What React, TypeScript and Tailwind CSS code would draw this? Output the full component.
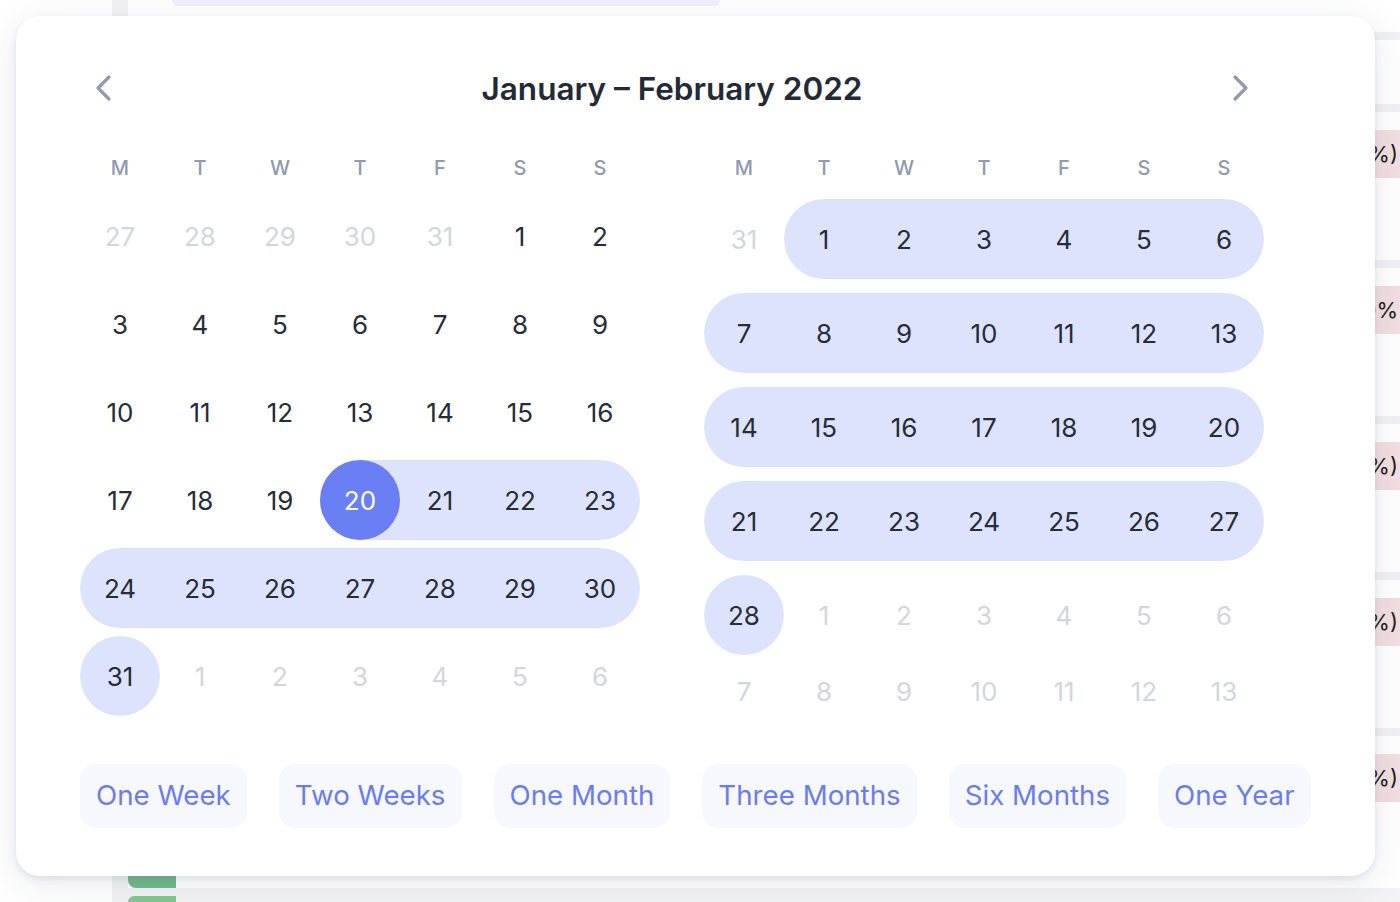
import React from 'react'

type Day = {
  n: number
  muted?: boolean
  range?: boolean
  start?: boolean
  end?: boolean
  selected?: boolean
}

const mk = (nums: number[], opts: Partial<Day> = {}): Day[] => nums.map((n) => ({ n, ...opts }))

const withEnds = (days: Day[]): Day[] => {
  const first = days.findIndex((d) => d.range)
  let last = -1
  days.forEach((d, i) => {
    if (d.range) last = i
  })
  return days.map((d, i) => ({ ...d, start: d.start || i === first, end: d.end || i === last }))
}

const january: Day[][] = [
  [...mk([27, 28, 29, 30, 31], { muted: true }), ...mk([1, 2])],
  mk([3, 4, 5, 6, 7, 8, 9]),
  mk([10, 11, 12, 13, 14, 15, 16]),
  withEnds([...mk([17, 18, 19]), { n: 20, range: true, selected: true }, ...mk([21, 22, 23], { range: true })]),
  withEnds(mk([24, 25, 26, 27, 28, 29, 30], { range: true })),
  withEnds([{ n: 31, range: true }, ...mk([1, 2, 3, 4, 5, 6], { muted: true })]),
]

const february: Day[][] = [
  withEnds([{ n: 31, muted: true }, ...mk([1, 2, 3, 4, 5, 6], { range: true })]),
  withEnds(mk([7, 8, 9, 10, 11, 12, 13], { range: true })),
  withEnds(mk([14, 15, 16, 17, 18, 19, 20], { range: true })),
  withEnds(mk([21, 22, 23, 24, 25, 26, 27], { range: true })),
  withEnds([{ n: 28, range: true }, ...mk([1, 2, 3, 4, 5, 6], { muted: true })]),
  mk([7, 8, 9, 10, 11, 12, 13], { muted: true }),
]

const weekdays = ['M', 'T', 'W', 'T', 'F', 'S', 'S']
const presets = ['One Week', 'Two Weeks', 'One Month', 'Three Months', 'Six Months', 'One Year']

function Chevron({ dir }: { dir: 'left' | 'right' }) {
  return (
    <svg width="20" height="30" viewBox="0 0 20 30" fill="none">
      <path
        d={dir === 'left' ? 'M15 4 L4 15 L15 26' : 'M5 4 L16 15 L5 26'}
        stroke="#8f9aab"
        strokeWidth="3.2"
        strokeLinecap="round"
        strokeLinejoin="round"
      />
    </svg>
  )
}

function Cell({ d, tall = true }: { d: Day; tall?: boolean }) {
  const color = d.muted ? 'text-[#d3d6dd]' : 'text-[#262d39]'
  return (
    <div
      className={`flex items-center justify-center ${tall ? 'h-20' : 'h-[44px]'} ${
        d.range ? 'bg-[#dde3fd]' : ''
      } ${d.start ? 'rounded-l-full' : ''} ${d.end ? 'rounded-r-full' : ''}`}
    >
      {d.selected ? (
        <div className="flex size-20 items-center justify-center rounded-full bg-[#6a7ff3] text-white">{d.n}</div>
      ) : (
        <span className={color}>{d.n}</span>
      )}
    </div>
  )
}

function Month({ weeks, rowGap, firstGap, shortLast }: { weeks: Day[][]; rowGap: string; firstGap: string; shortLast?: boolean }) {
  return (
    <div className="w-[560px]">
      <div className="grid h-10 grid-cols-7 items-center text-center text-[20px] font-medium text-[#8f9aad]">
        {weekdays.map((w, i) => (
          <div key={i}>{w}</div>
        ))}
      </div>
      <div className={`flex flex-col ${rowGap} ${firstGap} text-[26px]`}>
        {weeks.map((week, wi) => (
          <div key={wi} className="grid grid-cols-7">
            {week.map((d, di) => (
              <Cell key={di} d={d} tall={!(shortLast && wi === weeks.length - 1)} />
            ))}
          </div>
        ))}
      </div>
    </div>
  )
}

function BackgroundPage() {
  const rows = ['(+2.4%)', '(+8.0%', '(+1.6%)', '(-3%)', '(-5%)']
  return (
    <div className="flex h-full w-full">
      <div className="w-[112px] shrink-0" />
      <div className="w-4 shrink-0 bg-[#f2f2f3]" />
      <div className="flex min-w-0 flex-1 flex-col">
        <div className="ml-[44px] h-[6px] w-[548px] rounded-b-xl bg-[#eef0fd]" />
        <div className="mt-[26px] h-2 bg-[#f2f2f4]" />
        <div className="h-16" />
        {rows.map((r, i) => (
          <div key={i} className="flex h-[156px] flex-col">
            <div className="h-2 bg-[#f2f2f4]" />
            <div className="mt-[18px] flex h-12 items-center justify-end self-end bg-[#f3dfe0] pl-3 pr-[2px] text-[22px] text-[#222]">
              {r}
            </div>
          </div>
        ))}
        <div className="-mt-[10px] flex h-[14px] items-stretch">
          <div className="w-12 rounded-bl-lg bg-[#74b98a]" />
          <div className="flex-1" />
        </div>
        <div className="flex flex-1 items-stretch bg-[#f3f3f5]">
          <div className="mt-2 w-12 rounded-tl-lg bg-[#82c98f]" />
        </div>
      </div>
    </div>
  )
}

export default function App() {
  return (
    <div className="relative h-[902px] w-full overflow-hidden bg-white" style={{ fontFamily: 'Inter, "Noto Sans", sans-serif' }}>
      <BackgroundPage />

      {/* Date range popover */}
      <div className="absolute left-4 top-4 h-[860px] w-[1359px] rounded-3xl bg-white pl-16 pt-12 shadow-[0_3px_6px_rgba(40,50,90,0.10),0_8px_40px_rgba(40,50,90,0.10)]">
        <div className="flex h-12 w-[1184px] items-center justify-between">
          <button className="flex size-12 items-center justify-center">
            <Chevron dir="left" />
          </button>
          <h2 className="pt-[2px] text-[31.5px] font-semibold text-[#232a36]">January – February 2022</h2>
          <button className="flex size-12 items-center justify-center">
            <Chevron dir="right" />
          </button>
        </div>

        <div className="mt-9 flex gap-16">
          <Month weeks={january} rowGap="gap-2" firstGap="mt-2" />
          <Month weeks={february} rowGap="gap-[14px]" firstGap="mt-[11px]" shortLast />
        </div>

        <div className="mt-12 flex gap-8">
          {presets.map((p) => (
            <button key={p} className="h-16 rounded-2xl bg-[#f7f8fe] px-4 text-[27.7px] text-[#6a7cf0]">
              {p}
            </button>
          ))}
        </div>
      </div>
    </div>
  )
}
